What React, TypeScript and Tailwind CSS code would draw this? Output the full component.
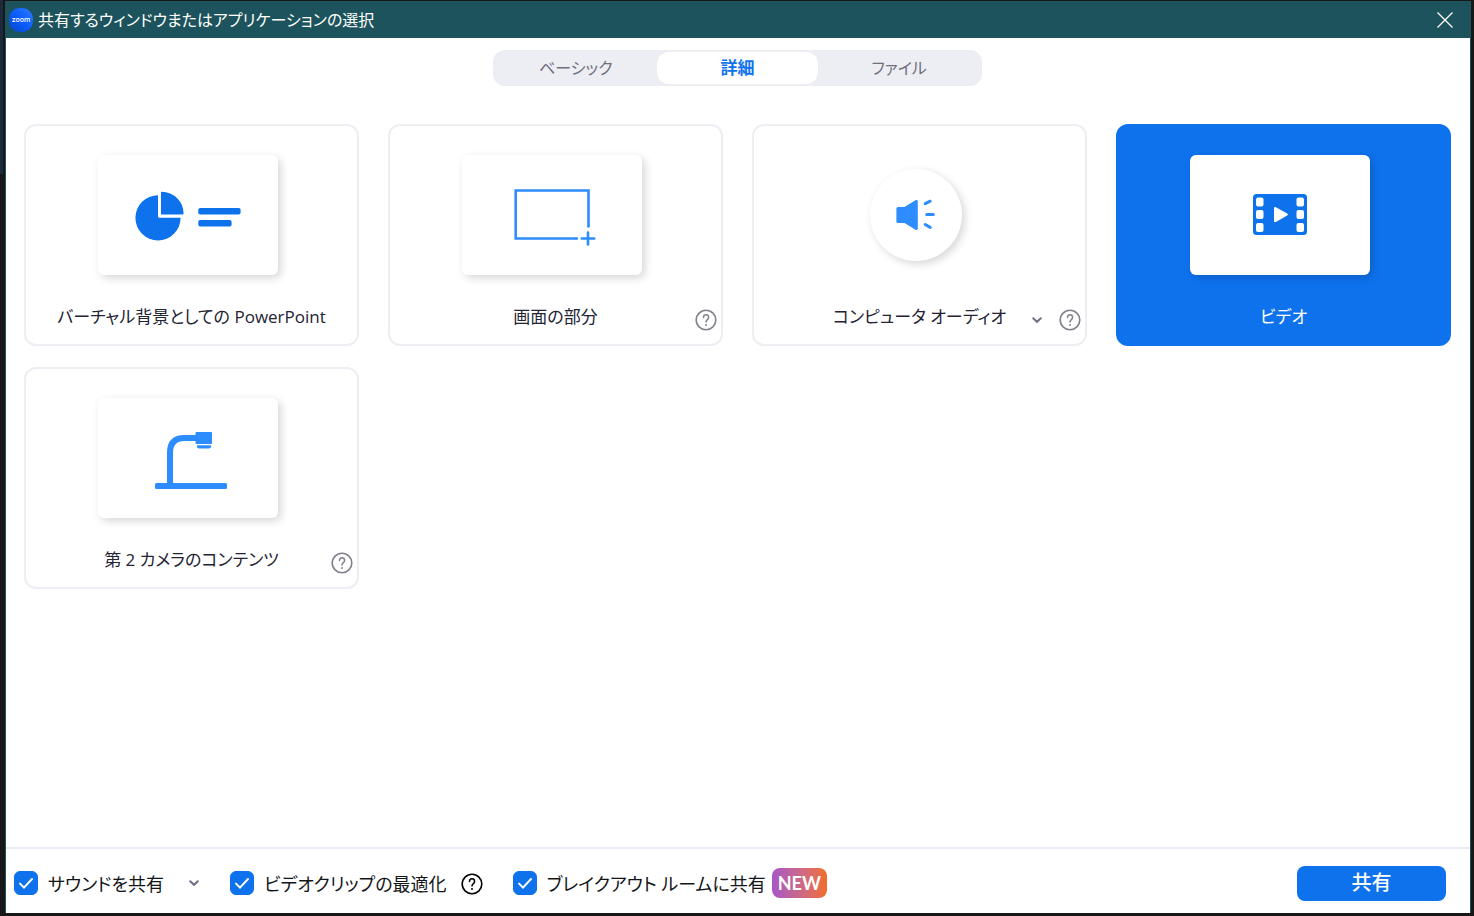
import { useState } from 'react';
import type { ReactNode } from 'react';

interface ShareOption {
    id: string;
    title: string;
    icon: ReactNode;
    round?: boolean;
    help?: boolean;
    menu?: boolean;
}

const PowerPointIcon = () => (
    <svg width="180" height="120" viewBox="0 0 180 120" aria-hidden="true">
        <path d="M60 40.2a22.6 22.6 0 1 0 22.6 22.6H61.5a1.5 1.5 0 0 1-1.5-1.5z" fill="#0e72ed" />
        <path d="M63 37.6a.8.8 0 0 1 .8-.8A21.8 21.8 0 0 1 85.6 58.6a.8.8 0 0 1-.8.8H63z" fill="#0e72ed" />
        <rect x="100.300" y="53" width="42.300" height="6.500" rx="1.800" fill="#0e72ed" />
        <rect x="100.300" y="65" width="33.300" height="6.500" rx="1.800" fill="#0e72ed" />
    </svg>
);

const PortionIcon = () => (
    <svg width="180" height="120" viewBox="0 0 180 120" fill="none" stroke="#2d8cff" strokeWidth="2.600" aria-hidden="true">
        <path d="M126.500 71V35.500H53.700V83.500H114.500" />
        <path d="M126.500 71v.5M114.500 83.500h.4M119.700 83.500h12.600M126 77.500v12" strokeLinecap="round" strokeWidth="2.600" />
    </svg>
);

const AudioIcon = () => (
    <svg width="92" height="92" viewBox="0 0 92 92" aria-hidden="true">
        <path
            d="M28 38h6.500L45.500 31.300c1-.6 2.300 0 2.300 1.200V59.500c0 1.200-1.300 1.800-2.300 1.200L34.500 54H28a1.600 1.600 0 0 1-1.600-1.600V39.600A1.600 1.600 0 0 1 28 38z"
            fill="#2d8cff"
        />
        <path d="M55.200 34.600l5-2.400M56.700 45.500h6.600M55.200 55.500l5 2.900" stroke="#2d8cff" strokeWidth="3" strokeLinecap="round" />
    </svg>
);

const VideoIcon = () => (
    <svg width="180" height="120" viewBox="0 0 180 120" aria-hidden="true">
        <rect x="63" y="39" width="54" height="41" rx="3.500" fill="#0e72ed" />
        <g fill="#fff">
            <rect x="66" y="42.500" width="7.500" height="9" rx="2" />
            <rect x="66" y="55" width="7.500" height="9" rx="2" />
            <rect x="66" y="68" width="7.500" height="9" rx="2" />
            <rect x="106.500" y="42.500" width="7.500" height="9" rx="2" />
            <rect x="106.500" y="55" width="7.500" height="9" rx="2" />
            <rect x="106.500" y="68" width="7.500" height="9" rx="2" />
            <path d="M84 53.200c0-1.100 1-1.500 1.900-1l11.300 6.400c.9.500.9 1.400 0 1.900l-11.300 6.400c-.9.500-1.900.1-1.900-1z" />
        </g>
    </svg>
);

const CameraIcon = () => (
    <svg width="180" height="120" viewBox="0 0 180 120" fill="#2d8cff" aria-hidden="true">
        <path d="M72 86V54.500Q72 40 86.500 40H100" fill="none" stroke="#2d8cff" strokeWidth="6" />
        <rect x="57" y="85" width="72" height="6" rx="1.500" />
        <rect x="97.500" y="34" width="16.500" height="12" rx="1" />
        <path d="M99 47.200h14v1.300a2 2 0 0 1-2 2H101a2 2 0 0 1-2-2z" />
    </svg>
);

const HelpIcon = () => (
    <svg width="22" height="22" viewBox="0 0 22 22" fill="none" stroke="currentColor" aria-hidden="true">
        <circle cx="11" cy="11" r="9.800" strokeWidth="1.600" />
        <path d="M8.500 8.600c0-1.800 1-2.800 2.500-2.800s2.600 1 2.600 2.600c0 2.200-2.600 2.300-2.600 4.600" strokeWidth="1.500" strokeLinecap="round" />
        <circle cx="11" cy="15.900" r="1" fill="currentColor" stroke="none" />
    </svg>
);

const ChevronIcon = () => (
    <svg width="12" height="12" viewBox="0 0 12 12" fill="none" stroke="#6e6e85" strokeWidth="2" strokeLinecap="round" aria-hidden="true">
        <path d="M2.200 4.300L6 7.800l3.800-3.500" />
    </svg>
);

const ZoomLogo = () => (
    <svg width="24" height="24" viewBox="0 0 24 24" aria-hidden="true">
        <defs>
            <linearGradient id="logo" x1="0" y1="1" x2="1" y2="0">
                <stop offset="0" stopColor="#0845c8" />
                <stop offset="0.500" stopColor="#0b5cff" />
                <stop offset="1" stopColor="#2f7dff" />
            </linearGradient>
        </defs>
        <path d="M12 0C19.500 0 24 4.500 24 12s-4.500 12-12 12S0 19.500 0 12 4.500 0 12 0z" fill="url(#logo)" />
        <text x="12" y="13.800" textAnchor="middle" fontSize="7" fontWeight="500" fill="#fff" fontFamily="Inter, sans-serif">
            zoom
        </text>
    </svg>
);

const tabs = ['ベーシック', '詳細', 'ファイル'];

const options: ShareOption[] = [
    { id: 'powerpoint', title: 'バーチャル背景としての PowerPoint', icon: <PowerPointIcon /> },
    { id: 'portion', title: '画面の部分', icon: <PortionIcon />, help: true },
    { id: 'audio', title: 'コンピュータ オーディオ', icon: <AudioIcon />, round: true, help: true, menu: true },
    { id: 'video', title: 'ビデオ', icon: <VideoIcon /> },
    { id: 'camera', title: '第 2 カメラのコンテンツ', icon: <CameraIcon />, help: true }
];

function OptionCard({ option, selected, onSelect }: { option: ShareOption; selected: boolean; onSelect: () => void }) {
    return (
        <div className="relative">
            <button
                type="button"
                aria-pressed={selected}
                onClick={onSelect}
                className={`flex h-[222px] w-full flex-col items-center rounded-xl border-2 pt-[29px] ${
                    selected ? 'border-[#0e72ed] bg-[#0e72ed] text-white' : 'border-[#ededf4] bg-white text-[#232333]'
                }`}
            >
                <span className="flex h-[120px] items-center justify-center pr-[7px]">
                    <span
                        className={`block bg-white shadow-[3px_3px_8px_rgba(0,0,0,0.16)] ${option.round ? 'rounded-full' : 'rounded-md'}`}
                    >
                        {option.icon}
                    </span>
                </span>
                <span className="mt-[30px] text-[17px] leading-6">{option.title}</span>
            </button>
            {option.help && (
                <div className="absolute right-[6px] bottom-[15px] flex items-center gap-4 text-[#82828f]">
                    {option.menu && (
                        <button type="button" aria-label="オーディオ オプション">
                            <ChevronIcon />
                        </button>
                    )}
                    <button type="button" aria-label="ヘルプ">
                        <HelpIcon />
                    </button>
                </div>
            )}
        </div>
    );
}

function Checkbox({ label }: { label: string }) {
    return (
        <label className="flex items-center gap-[10px] text-lg leading-6 whitespace-nowrap text-[#131619]">
            <span className="grid size-6">
                <input
                    type="checkbox"
                    defaultChecked
                    className="peer col-start-1 row-start-1 size-6 appearance-none rounded-md border border-[#babacc] checked:border-[#0e72ed] checked:bg-[#0e72ed]"
                />
                <svg
                    className="pointer-events-none invisible col-start-1 row-start-1 peer-checked:visible"
                    width="24"
                    height="24"
                    viewBox="0 0 24 24"
                    fill="none"
                    stroke="#fff"
                    strokeWidth="2"
                    strokeLinecap="round"
                    aria-hidden="true"
                >
                    <path d="M6 12.600l4 4L18 8" />
                </svg>
            </span>
            <span className="pt-[2px]">{label}</span>
        </label>
    );
}

export default function App() {
    const [tab, setTab] = useState('詳細');
    const [selected, setSelected] = useState('video');

    return (
        <div className="flex min-h-screen bg-[#171717] pr-[3px] pb-[3px] font-['Open_Sans','Noto_Sans_CJK_JP',sans-serif] [font-feature-settings:'palt']">
            <div className="h-[174px] w-[3px] bg-[#1c2a3d]" />
            <div className="mt-px ml-[2px] flex flex-1 flex-col border-x border-[#1c535c] bg-white">
                <header className="flex h-[37px] items-center justify-between bg-[#1c535c] pr-[17px] pl-[3px] text-white">
                    <div className="flex items-center gap-[5px]">
                        <ZoomLogo />
                        <h1 className="text-base leading-6">共有するウィンドウまたはアプリケーションの選択</h1>
                    </div>
                    <button type="button" aria-label="閉じる">
                        <svg width="16" height="16" viewBox="0 0 16 16" stroke="#fff" strokeWidth="1.300" aria-hidden="true">
                            <path d="M.5.500l15 15M15.500.500l-15 15" />
                        </svg>
                    </button>
                </header>

                <main className="flex-1 pt-3 pr-[19px] pl-[18px]">
                    <div role="tablist" className="mx-auto grid h-9 w-[489px] grid-cols-3 rounded-xl bg-[#ededf4] p-[2px]">
                        {tabs.map((name) => (
                            <button
                                key={name}
                                type="button"
                                role="tab"
                                aria-selected={tab === name}
                                onClick={() => setTab(name)}
                                className={`rounded-xl leading-6 ${
                                    tab === name ? 'bg-white text-[17px] font-bold text-[#0e72ed]' : 'text-base text-[#6e6e7c]'
                                }`}
                            >
                                {name}
                            </button>
                        ))}
                    </div>

                    <div className="mt-[38px] grid grid-cols-4 gap-x-[29px] gap-y-[21px]">
                        {options.map((option) => (
                            <OptionCard
                                key={option.id}
                                option={option}
                                selected={selected === option.id}
                                onSelect={() => setSelected(option.id)}
                            />
                        ))}
                    </div>
                </main>

                <footer className="flex h-[66px] items-center justify-between border-t-2 border-[#e8ebf3] pt-1 pr-6 pl-2">
                    <div className="flex items-center gap-[30px]">
                        <div className="flex items-center gap-6">
                            <Checkbox label="サウンドを共有" />
                            <button type="button" aria-label="サウンド オプション">
                                <ChevronIcon />
                            </button>
                        </div>
                        <div className="flex items-center gap-[14px]">
                            <Checkbox label="ビデオクリップの最適化" />
                            <button type="button" aria-label="ヘルプ" className="pt-[2px] text-black">
                                <HelpIcon />
                            </button>
                        </div>
                        <div className="flex items-center gap-[6px]">
                            <Checkbox label="ブレイクアウト ルームに共有" />
                            <span className="flex h-[30px] items-center rounded-lg bg-linear-to-r from-[#a855c7] to-[#f26d21] px-[6px] font-['Lato',sans-serif] text-lg leading-6 font-bold text-white">
                                NEW
                            </span>
                        </div>
                    </div>
                    <button type="button" className="h-[35px] w-[149px] rounded-lg bg-[#0e72ed] text-xl leading-6 font-medium text-white">
                        共有
                    </button>
                </footer>
            </div>
        </div>
    );
}
